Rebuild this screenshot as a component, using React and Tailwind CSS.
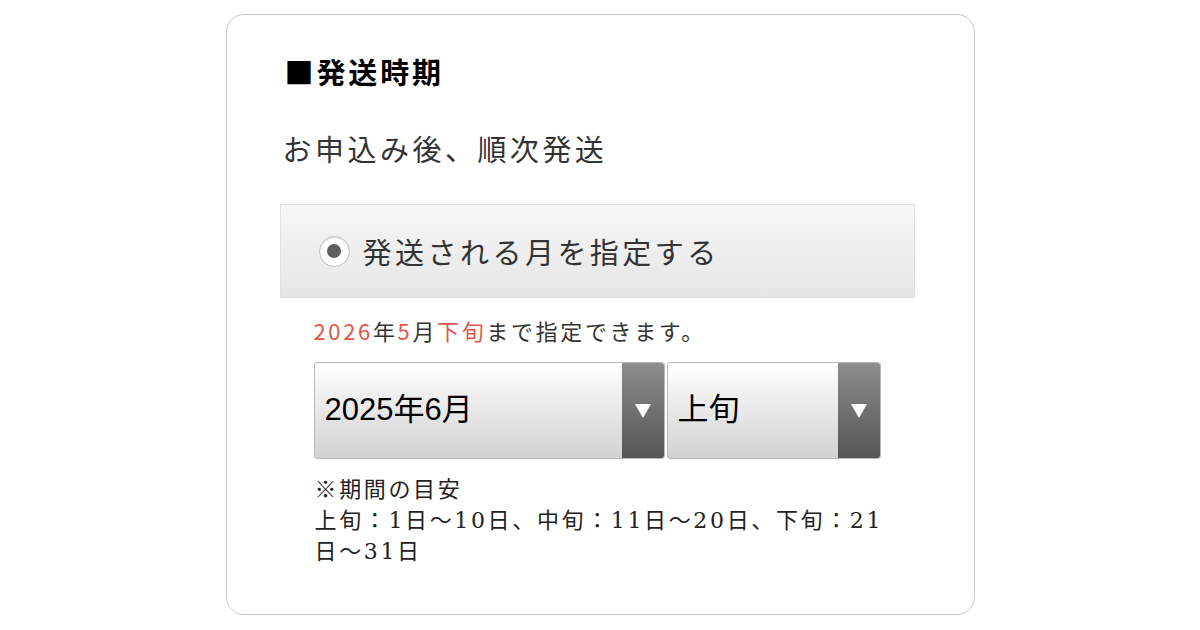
import React from 'react';

const font = { fontFamily: '"Noto Sans CJK JP", "Noto Sans", sans-serif' };

const Arrow = () => (
  <div className="flex w-[42px] shrink-0 items-center justify-center rounded-r-[3px] bg-gradient-to-b from-[#8e8e8e] to-[#555555]">
    <svg width="18" height="16" viewBox="0 0 18 16">
      <path d="M1 1 L17 1 L9 15 Z" fill="#ffffff" />
    </svg>
  </div>
);

const Select = ({ label, width }) => (
  <div className={`flex h-[97px] ${width} rounded-[3px] border border-[#b9b9b9] bg-gradient-to-b from-white to-[#d2d2d2]`}>
    <div className="flex flex-1 items-center pl-[10px] text-[31px] text-black font-['Liberation_Sans',_'Noto_Sans_CJK_JP',_sans-serif]">
      {label}
    </div>
    <Arrow />
  </div>
);

const App = () => {
  return (
    <div className="min-h-screen w-[1200px] bg-white pt-[14px]" style={font}>
      <div className="mx-auto flex h-[601px] w-[749px] flex-col rounded-[18px] border border-[#c6c6c6] pt-[36px]">
        <h2 className="ml-[58px] text-[29px] font-bold leading-[40px] tracking-[0.1em] text-black">■発送時期</h2>
        <p className="ml-[56px] mt-[37px] text-[29px] leading-[40px] tracking-[0.12em] text-[#333333]">お申込み後、順次発送</p>

        <div className="ml-[53px] mt-[36px] flex h-[94px] w-[635px] items-center border border-[#e2e2e2] bg-gradient-to-b from-[#f7f7f7] to-[#e6e6e6] pl-[38px]">
          <span className="flex h-[31px] w-[31px] items-center justify-center rounded-full border border-[#bdbdbd] bg-white shadow-[inset_0_1px_2px_rgba(0,0,0,0.15)]">
            <span className="h-[14px] w-[14px] rounded-full bg-[#5e5e5e]" />
          </span>
          <span className="ml-[13px] text-[29px] leading-[40px] tracking-[0.12em] text-[#333333]">発送される月を指定する</span>
        </div>

        <p className="ml-[87px] mt-[18px] text-[22px] leading-[28px] tracking-[0.12em] text-[#333333]">
          <span className="text-[#e2574c]">2026</span>年<span className="text-[#e2574c]">5</span>月<span className="text-[#e2574c]">下旬</span>まで指定できます。
        </p>

        <div className="ml-[87px] mt-[18px] flex gap-[2px]">
          <Select label="2025年6月" width="w-[351px]" />
          <Select label="上旬" width="w-[214px]" />
        </div>

        <div className="ml-[88px] mt-[15px] w-[584px] text-[22px] leading-[31px] tracking-[0.12em] text-[#222222] font-['DejaVu_Serif',_'Noto_Sans_CJK_JP',_serif]">
          <p>※期間の目安</p>
          <p>上旬：1日～10日、中旬：11日～20日、下旬：21日～31日</p>
        </div>
      </div>
    </div>
  );
};

export default App;
